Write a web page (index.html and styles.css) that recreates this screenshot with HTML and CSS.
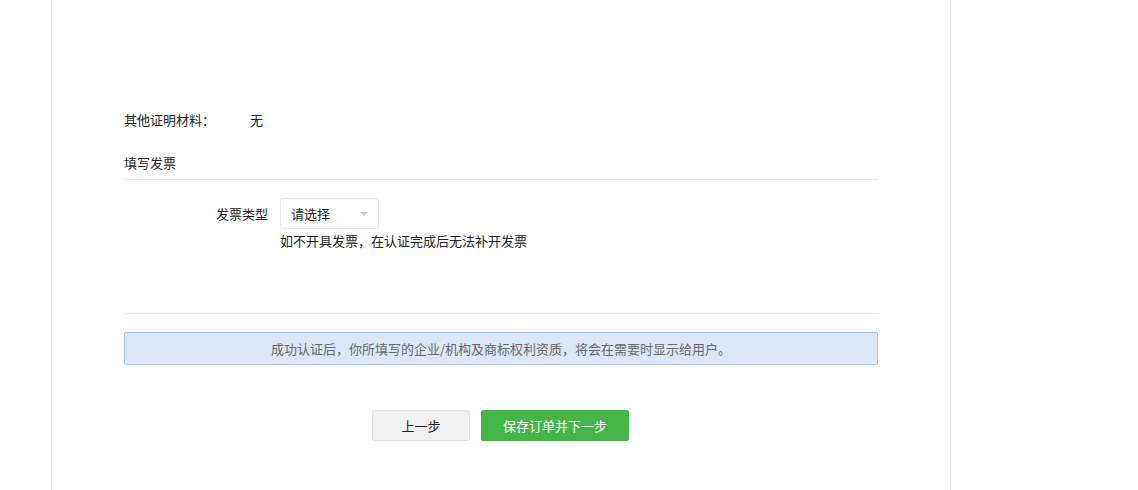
FILE: index.html
```html
<!DOCTYPE html>
<html lang="zh-CN">
<head>
    <meta charset="UTF-8">
    <title>填写发票</title>
    <link rel="stylesheet" href="styles.css">
</head>
<body>
    <div class="page">
        <div class="content">
            <div class="info-row">
                <span class="info-label">其他证明材料：</span>
                <span class="info-value">无</span>
            </div>

            <h2 class="section-title">填写发票</h2>

            <div class="form-row">
                <label class="form-label" for="invoiceType">发票类型</label>
                <div class="form-field">
                    <div class="select-box" id="invoiceType">
                        <span>请选择</span>
                        <i class="select-arrow"></i>
                    </div>
                    <p class="form-tip">如不开具发票，在认证完成后无法补开发票</p>
                </div>
            </div>

            <div class="divider"></div>

            <div class="notice">成功认证后，你所填写的企业/机构及商标权利资质，将会在需要时显示给用户。</div>

            <div class="actions">
                <button class="btn btn-default">上一步</button>
                <button class="btn btn-primary">保存订单并下一步</button>
            </div>
        </div>
    </div>
</body>
</html>
```

FILE: styles.css
```css
body {
    margin: 0;
    font-family: "Noto Sans CJK SC", "Microsoft YaHei", sans-serif;
    font-size: 13px;
    color: #222;
    background-color: #ffffff;
}
.page {
    margin-left: 51px;
    width: 898px;
    min-height: 490px;
    border-left: 1px solid #e7e7e7;
    border-right: 1px solid #e7e7e7;
}
.content {
    padding: 110px 72px 0;
}
.info-row {
    display: flex;
    line-height: 20px;
}
.info-label {
    width: 126px;
}
.section-title {
    margin: 23px 0 0;
    padding-bottom: 6px;
    font-size: 13px;
    font-weight: normal;
    line-height: 20px;
    border-bottom: 1px solid #e7e7e7;
}
.form-row {
    display: flex;
    margin-top: 18px;
}
.form-label {
    width: 144px;
    margin-right: 12px;
    text-align: right;
    line-height: 31px;
}
.select-box {
    box-sizing: border-box;
    width: 99px;
    height: 31px;
    padding: 0 10px;
    border: 1px solid #e7e7e7;
    border-radius: 3px;
    display: flex;
    align-items: center;
    justify-content: space-between;
}
.select-arrow {
    width: 0;
    height: 0;
    border-left: 4px solid transparent;
    border-right: 4px solid transparent;
    border-top: 4px solid #c8c8c8;
}
.form-tip {
    margin: 3px 0 0;
    line-height: 18px;
}
.divider {
    margin-top: 63px;
    border-top: 1px solid #e7e7e7;
}
.notice {
    margin-top: 18px;
    height: 31px;
    line-height: 31px;
    text-align: center;
    color: #666;
    background-color: #dce8f9;
    border: 1px solid #a9c2e6;
    border-radius: 2px;
}
.actions {
    display: flex;
    justify-content: center;
    gap: 11px;
    margin-top: 45px;
    padding-right: 1px;
}
.btn {
    height: 31px;
    font-family: inherit;
    font-size: 13px;
    border-radius: 2px;
    cursor: pointer;
    padding: 0;
}
.btn-default {
    width: 98px;
    color: #222;
    background-color: #f0f0f0;
    border: 1px solid #e2e2e2;
}
.btn-primary {
    width: 148px;
    color: #ffffff;
    background-color: #44b549;
    border: 1px solid #44b549;
}
```
